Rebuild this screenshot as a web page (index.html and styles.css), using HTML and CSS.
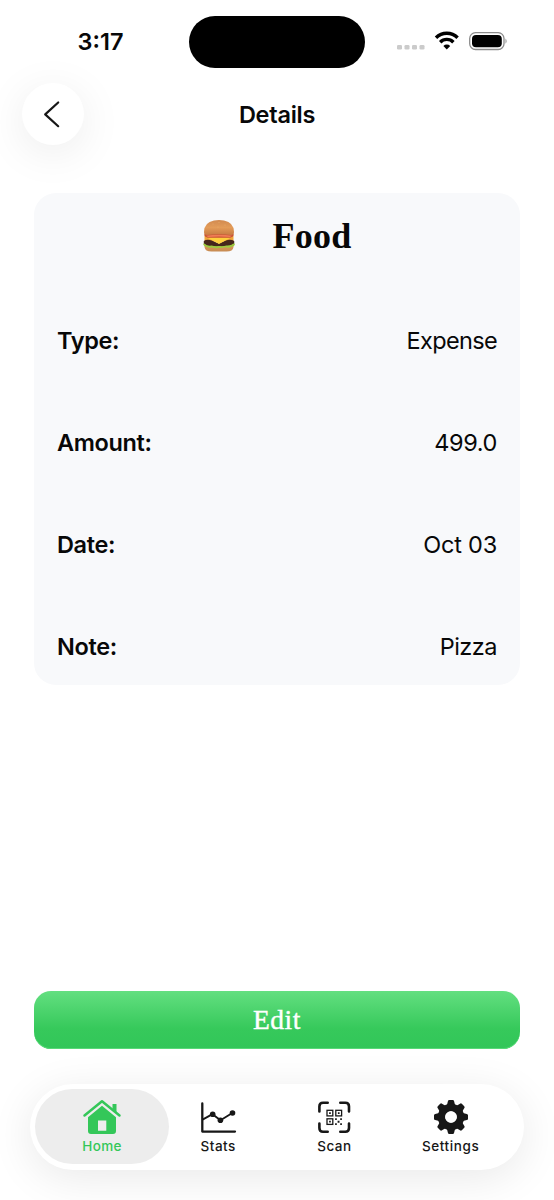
FILE: index.html
```html
<!DOCTYPE html>
<html lang="en">
<head>
<meta charset="utf-8">
<title>Details</title>
<link rel="stylesheet" href="styles.css">
</head>
<body>
<div class="screen">
  <div class="status">
    <span class="time">3:17</span>
    <span class="island"></span>
    <svg class="indicators" width="112" height="22" viewBox="0 0 112 22">
      <g fill="#cbcbcb"><rect x="0" y="15" width="5" height="4.600" rx="1.300"/><rect x="7.500" y="15" width="5" height="4.600" rx="1.300"/><rect x="15" y="15" width="5" height="4.600" rx="1.300"/><rect x="22.500" y="15" width="5" height="4.600" rx="1.300"/></g>
      <g fill="none" stroke="#000" stroke-width="3.400">
        <path d="M39 7.700a15.200 15.200 0 0 1 21.600 0"/>
        <path d="M43.200 12.200a9.200 9.200 0 0 1 13.200 0"/>
      </g>
      <path d="M46.400 15.900a4.800 4.800 0 0 1 6.800 0L49.800 19.400z"/>
      <rect x="72.700" y="2.700" width="34.300" height="16.800" rx="5.800" fill="#fff" stroke="#8c8c8c" stroke-width="1.300"/>
      <rect x="75" y="4.900" width="29.800" height="12.400" rx="4" fill="#000"/>
      <path d="M108.500 8.600q2.200 2.600 0 5.200z" fill="#8c8c8c"/>
    </svg>
  </div>
  <header class="header">
    <button class="back" aria-label="Back">
      <svg width="62" height="62" viewBox="0 0 62 62"><path d="M36.200 19.500L23.200 31.400L36.200 43.200" fill="none" stroke="#171717" stroke-width="2.200" stroke-linecap="round" stroke-linejoin="round"/></svg>
    </button>
    <h1 class="title">Details</h1>
  </header>
  <main class="card">
    <div class="category">
      <svg class="burger" width="34" height="36" viewBox="0 0 34 36" aria-label="Hamburger">
        <defs>
          <linearGradient id="bun" x1="0" y1="0" x2="0" y2="1"><stop offset="0" stop-color="#d18a50"/><stop offset=".5" stop-color="#e39c59"/><stop offset="1" stop-color="#c87b42"/></linearGradient>
          <linearGradient id="base" x1="0" y1="0" x2="0" y2="1"><stop offset="0" stop-color="#dc9a58"/><stop offset="1" stop-color="#c78b53"/></linearGradient>
        </defs>
        <path d="M2.500 26h29v3q-.5 4.500-7 4.500h-15q-6.500 0-7-4.500z" fill="url(#base)"/>
        <path d="M2.500 17.500h29v6h-29z" fill="#f0a63d"/>
        <path d="M1.800 23q3-2 8-.5l7 3 7-3q5-1.500 8.400.5 1 5-5 5.500H7q-6-.5-5.200-5.500z" fill="#45261b"/>
        <path d="M3 18.800h28L28 20l-11 6-11-6z" fill="#ffcf3d"/>
        <path d="M1 25.500q2-.4 3.500 1.500 2.500 1 5 .5 3.500 1 7.500.5 4 .5 7.500-.5 3 .2 5-.7Q31.500 25 33 25.600 33 28.500 29.500 28.800 27 30.500 23 29.300 20 30.700 17 29.700 13.500 31 10 29.500 6.500 30.500 4.500 28.800 1.500 28.500 1 25.500z" fill="#9cc93f"/>
        <path d="M2.500 15.500h29q1 3-3 4.200H5.500q-4-1.200-3-4.200z" fill="#c95234"/>
        <path d="M4 17.700q13-1.700 26 0l-2 1.300q-11-.8-22 0z" fill="#f07c55"/>
        <path d="M2 14Q2 4.500 12 2.500q5-1 10 0Q32 4.500 32 14q0 3-3 3-12-1.500-24 0-3 0-3-3z" fill="url(#bun)"/>
        <g fill="#f0be80"><circle cx="11" cy="6" r=".4"/><circle cx="17" cy="4.500" r=".4"/><circle cx="23" cy="7" r=".4"/><circle cx="16" cy="9" r=".4"/></g>
      </svg>
      <h2 class="name">Food</h2>
    </div>
    <dl class="rows">
      <div class="row"><dt class="type">Type:</dt><dd class="expense">Expense</dd></div>
      <div class="row"><dt class="amount">Amount:</dt><dd class="sum">499.0</dd></div>
      <div class="row"><dt class="date">Date:</dt><dd class="day">Oct 03</dd></div>
      <div class="row"><dt class="note">Note:</dt><dd class="pizza">Pizza</dd></div>
    </dl>
  </main>
  <button class="edit">Edit</button>
  <nav class="tabs">
    <a class="tab active">
      <svg width="40" height="38" viewBox="0 0 40 38">
        <path d="M2.500 17.500L20 3.200L37.500 17.500" fill="none" stroke="#34c759" stroke-width="2.500" stroke-linecap="round" stroke-linejoin="round"/>
        <path d="M30.500 6h4v9l-4-3.300z" fill="#34c759"/>
        <path fill-rule="evenodd" d="M20 7.800L34 19.300V33q0 3-3 3H9q-3 0-3-3V19.300zM16 22.500v10.200h8.300V22.500z" fill="#34c759"/>
      </svg>
      <span class="label home">Home</span>
    </a>
    <a class="tab">
      <svg width="40" height="38" viewBox="0 0 40 38" fill="none" stroke="#171717" stroke-linecap="round" stroke-linejoin="round">
        <path d="M4.300 5.500V33.600H37" stroke-width="2.300"/><path d="M5 21.300L14.500 16.200L22.500 22.300L34.300 15" stroke-width="1.900"/>
        <g fill="#171717" stroke="none"><circle cx="14.700" cy="16.200" r="2.800"/><circle cx="22.400" cy="22.300" r="2.800"/><circle cx="34.500" cy="15" r="2.800"/></g>
      </svg>
      <span class="label">Stats</span>
    </a>
    <a class="tab">
      <svg width="40" height="38" viewBox="0 0 40 38">
        <path d="M5.400 13.500V8.500Q5.400 4.800 9 4.800H13.700M26.300 4.800H31.300Q35 4.800 35 8.500V13.500M5.400 25.500V30Q5.400 33.800 9 33.800H13.700M26.300 33.800H31.300Q35 33.800 35 30V25.500" fill="none" stroke="#171717" stroke-width="2.600" stroke-linecap="round"/>
        <g fill="none" stroke="#171717" stroke-width="1.300"><rect x="13" y="12.300" width="5.800" height="5.600"/><rect x="21.800" y="12.300" width="5.800" height="5.600"/><rect x="13" y="20.800" width="5.800" height="5.600"/></g>
        <path fill="#171717" d="M15.100 14.300h1.700v1.700h-1.700zM23.900 14.300h1.700v1.700h-1.700zM15.100 22.800h1.700v1.700h-1.700zM21.100 20.300h1.700v1.700h-1.700zM26.200 20.300h1.700v1.700h-1.700zM23.600 22.800h1.900v1.900h-1.900zM21.100 25.300h1.700v1.700h-1.700zM26.200 25.300h1.700v1.700h-1.700z"/>
      </svg>
      <span class="label">Scan</span>
    </a>
    <a class="tab">
      <svg width="40" height="38" viewBox="-20 -19 40 38">
        <defs><path id="tooth" d="M-4.300-11L-3.100-15.800Q-2.900-17-1.700-17H1.700Q2.900-17 3.100-15.800L4.300-11z"/></defs>
        <g fill="#171717"><use href="#tooth"/><use href="#tooth" transform="rotate(45)"/><use href="#tooth" transform="rotate(90)"/><use href="#tooth" transform="rotate(135)"/><use href="#tooth" transform="rotate(180)"/><use href="#tooth" transform="rotate(225)"/><use href="#tooth" transform="rotate(270)"/><use href="#tooth" transform="rotate(315)"/>
        <circle r="9.500" fill="none" stroke="#171717" stroke-width="7.400"/></g>
        <circle r="5.800" fill="#fff"/>
      </svg>
      <span class="label settings">Settings</span>
    </a>
  </nav>
</div>
</body>
</html>
```
FILE: styles.css
```css
* { box-sizing: border-box; }
body { margin: 0; background: #fff; font-family: Inter, "Liberation Sans", sans-serif; color: #080808; }
.screen { width: 554px; height: 1200px; overflow: hidden; display: flex; flex-direction: column; }
.status { height: 83px; display: grid; grid-template-columns: 189px 176px 1fr; align-items: start; flex: none; }
.time { padding: 27px 0 0 77.5px; font-size: 23.5px; line-height: 29px; font-weight: 600; letter-spacing: 0; }
.island { margin-top: 16px; height: 52px; border-radius: 26px; background: #000; }
.indicators { margin: 30px 0 0 32px; }
.header { height: 62px; padding: 0 22px; display: grid; grid-template-columns: 62px 1fr 62px; align-items: center; flex: none; }
.back { width: 62px; height: 62px; padding: 0; border: 0; border-radius: 50%; background: #fff; box-shadow: 0 8px 44px rgba(0, 0, 0, .08); }
.back svg { display: block; }
.title { margin: 0; padding-top: 1px; text-align: center; font-size: 23.5px; line-height: 31px; font-weight: 600; letter-spacing: -.25px; }
.card { width: 486px; height: 492px; margin: 48px 0 0 34px; padding: 0 23px; border-radius: 22px; background: #f8f9fb; flex: none; }
.category { height: 97px; padding-top: 23px; display: flex; align-items: flex-start; justify-content: center; gap: 36px; }
.burger { margin-top: 2px; }
.name { margin: 0; font: 700 36px/40px "Liberation Serif", serif; letter-spacing: .3px; }
.rows { margin: 0; }
.row { height: 102px; display: flex; align-items: center; justify-content: space-between; font-size: 23.5px; line-height: 30px; }
.row dt { font-weight: 600; letter-spacing: -.35px; }
.row dd { margin: 0; letter-spacing: -.2px; }
.row .expense { letter-spacing: -.65px; }
.row .sum { letter-spacing: -.4px; }
.row .pizza { letter-spacing: -.5px; }
.edit { width: 486px; height: 58px; margin: 306px 0 0 34px; padding: 0; border: 0; border-radius: 17px; background: linear-gradient(#63df80, #36c95b 65%, #32c659); box-shadow: inset 0 -1px #58d978; color: #fff; font: 400 27.5px/58px "Liberation Serif", serif; letter-spacing: .6px; -webkit-text-stroke: .4px #fff; flex: none; }
.tabs { width: 494px; height: 86px; margin: 35px 0 0 30px; padding: 5px; border-radius: 43px; display: flex; background: #fff; box-shadow: 0 8px 44px rgba(0, 0, 0, .09); flex: none; }
.tab { width: 134px; height: 75px; margin-right: -17.800px; padding-top: 9px; border-radius: 38px; display: flex; flex-direction: column; align-items: center; flex: none; color: #171717; }
.tab svg { display: block; }
.active { background: #ededed; color: #34c759; }
.label { font-size: 13.5px; line-height: 18px; margin-top: 1px; font-weight: 500; letter-spacing: .5px; }
.label.home { letter-spacing: .35px; }
.label.settings { letter-spacing: .6px; }
```
